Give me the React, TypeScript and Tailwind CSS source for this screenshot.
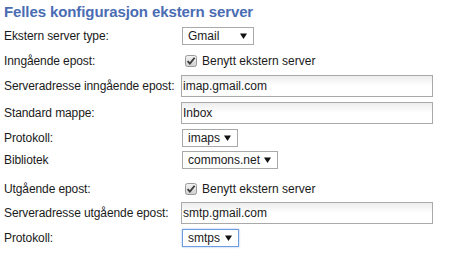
import React from 'react';

const font = "font-['Liberation_Sans',Arial,sans-serif]";

const Arrow = () => (
  <svg width="7" height="6" viewBox="0 0 7 6" className="shrink-0">
    <path d="M0 0.5 H7 L3.5 6 Z" fill="#111" />
  </svg>
);

const Select = ({ value, width, focused = false }: { value: string; width: number; focused?: boolean }) => (
  <div
    className={`ml-[1px] flex h-[18px] items-center justify-between bg-white pl-[5px] pr-[6px] ${
      focused ? 'border border-[#6f9be0] shadow-[0_0_2px_#9dbdf0]' : 'border border-[#a9a9a9]'
    }`}
    style={{ width }}
  >
    <span className="leading-none">{value}</span>
    <Arrow />
  </div>
);

const TextInput = ({ value }: { value: string }) => (
  <div className="flex h-[22px] w-[252px] items-center border border-[#a9a9a9] bg-gradient-to-b from-[#ededed] via-white to-white pl-[1px] leading-none">
    {value}
  </div>
);

const Checkbox = () => (
  <div className="ml-[4px] flex items-center gap-[5px]">
    <svg width="12" height="12" viewBox="0 0 12 12">
      <defs>
        <linearGradient id="cb" x1="0" y1="0" x2="0" y2="1">
          <stop offset="0" stopColor="#f4f4f4" />
          <stop offset="1" stopColor="#cfcfcf" />
        </linearGradient>
      </defs>
      <rect x="0.5" y="0.5" width="11" height="11" rx="2" fill="url(#cb)" stroke="#9a9a9a" />
      <path d="M2.6 6.2 L4.9 8.6 L9.6 2.8" fill="none" stroke="#3a3a3a" strokeWidth="1.8" />
    </svg>
    <span>Benytt ekstern server</span>
  </div>
);

const Row = ({ label, h, mt = 0, children }: { label: string; h: number; mt?: number; children: React.ReactNode }) => (
  <div className="flex items-center" style={{ height: h, marginTop: mt }}>
    <div className="w-[177px] shrink-0 tracking-[-0.1px]">{label}</div>
    {children}
  </div>
);

export default function App() {
  return (
    <div className={`h-[255px] w-[472px] bg-white pl-[4px] text-[12px] text-[#1a1a1a] ${font}`}>
      <div className="h-[26px] pt-[4px] text-[15px] font-bold leading-[15px] tracking-[-0.1px] text-[#4a6cb3]">
        Felles konfigurasjon ekstern server
      </div>
      <Row label="Ekstern server type:" h={20}>
        <Select value="Gmail" width={72} />
      </Row>
      <Row label="Inngående epost:" h={29}>
        <Checkbox />
      </Row>
      <Row label="Serveradresse inngående epost:" h={22}>
        <TextInput value="imap.gmail.com" />
      </Row>
      <Row label="Standard mappe:" h={22} mt={5}>
        <TextInput value="Inbox" />
      </Row>
      <Row label="Protokoll:" h={20} mt={4}>
        <Select value="imaps" width={56} />
      </Row>
      <Row label="Bibliotek" h={21} mt={1}>
        <Select value="commons.net" width={96} />
      </Row>
      <Row label="Utgående epost:" h={26} mt={6}>
        <Checkbox />
      </Row>
      <Row label="Serveradresse utgående epost:" h={22}>
        <TextInput value="smtp.gmail.com" />
      </Row>
      <Row label="Protokoll:" h={22} mt={3}>
        <Select value="smtps" width={57} focused />
      </Row>
    </div>
  );
}
